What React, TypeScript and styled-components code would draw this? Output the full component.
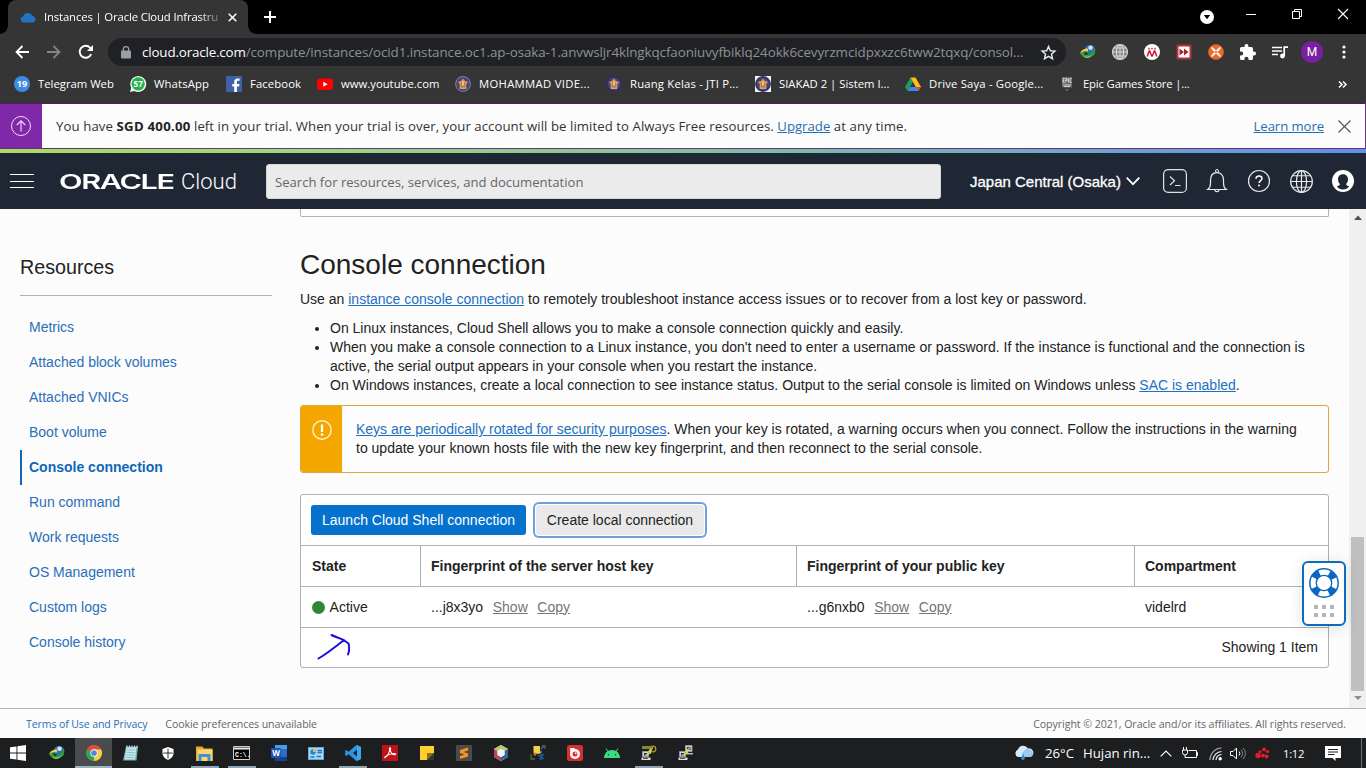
import React from "react";
import styled, { createGlobalStyle, css } from "styled-components";

const ui = `"Open Sans", "Noto Sans", sans-serif`;
const arial = `"Liberation Sans", Arial, sans-serif`;

const GlobalStyle = createGlobalStyle`
  * { box-sizing: border-box; }
  body { margin: 0; width: 1366px; height: 768px; overflow: hidden; background: #fcfcfc; font-family: ${arial}; }
  svg { display: block; flex: none; overflow: visible; }
`;

const Screen = styled.div`
  width: 1366px;
  height: 768px;
  display: flex;
  flex-direction: column;
  overflow: hidden;
`;

const Text = styled.span<{ $size?: number; $ls?: number; $color?: string; $bold?: boolean }>`
  font-family: ${ui};
  font-size: ${(p) => p.$size ?? 11.3}px;
  letter-spacing: ${(p) => p.$ls ?? 0}px;
  color: ${(p) => p.$color ?? "#fff"};
  font-weight: ${(p) => (p.$bold ? 700 : 400)};
  white-space: pre;
`;

/* ---------- browser chrome ---------- */

const TabStrip = styled.div`
  height: 34px;
  flex: none;
  background: #000;
  display: flex;
  padding-left: 8px;
`;
const Tab = styled.div`
  width: 240px;
  height: 34px;
  background: #353535;
  border-radius: 8px 8px 0 0;
  display: flex;
  align-items: center;
  padding: 0 10px 0 12px;
  position: relative;
  &::before, &::after {
    content: "";
    position: absolute;
    bottom: 0;
    width: 8px;
    height: 8px;
  }
  &::before { left: -8px; background: radial-gradient(circle at 0 0, transparent 7.5px, #353535 8px); }
  &::after { right: -8px; background: radial-gradient(circle at 100% 0, transparent 7.5px, #353535 8px); }
`;
const TabTitle = styled.div`
  width: 176px;
  margin: 0 8px 0 8px;
  line-height: 20px;
  display: flex;
  mask-image: linear-gradient(90deg, #000 155px, transparent 182px);
`;
const NewTab = styled.div`
  width: 44px;
  display: grid;
  place-items: center;
`;
const WindowButtons = styled.div`
  margin-left: auto;
  display: flex;
  height: 30px;
  svg { margin-top: 4px; }
`;
const WindowButton = styled.div<{ $w: number }>`
  width: ${(p) => p.$w}px;
  display: flex;
  justify-content: center;
`;

const Toolbar = styled.div`
  height: 36px;
  flex: none;
  background: #353535;
  display: flex;
  align-items: center;
  padding: 0 6px;
`;
const NavButton = styled.div`
  width: 32px;
  display: grid;
  place-items: center;
`;
const Omnibox = styled.div`
  width: 958px;
  height: 28px;
  margin: 0 6px;
  border-radius: 14px;
  background: #202124;
  display: flex;
  align-items: center;
  padding: 0 10px 0 13px;
`;
const Url = styled.div`
  flex: 1;
  margin-left: 11px;
  line-height: 24px;
  white-space: nowrap;
  display: flex;
`;
const Bookmarks = styled.div`
  height: 32px;
  flex: none;
  background: #353535;
  display: flex;
  align-items: center;
  padding: 0 19px 4px 14px;
`;
const Bookmark = styled.div<{ $w: number }>`
  width: ${(p) => p.$w}px;
  display: flex;
  align-items: center;
  gap: 8px;
`;
const BookmarkLabel = styled(Text)`
  padding-bottom: 2px;
`;
const Badge = styled.span`
  width: 16px;
  height: 16px;
  border-radius: 50%;
  background: #3c8ce4;
  color: #fff;
  font: 700 9px/16px ${ui};
  text-align: center;
`;
const More = styled.div`
  margin-left: auto;
`;
const Avatar = styled.div`
  width: 22px;
  height: 22px;
  border-radius: 50%;
  background: #7b1fa2;
  color: #fff;
  font: 12px/22px Roboto, sans-serif;
  text-align: center;
`;

/* ---------- trial banner and console header ---------- */

const Banner = styled.div`
  height: 47px;
  flex: none;
  border: 1px solid #6b2f86;
  border-top: 2px solid #43254f;
  border-left: 0;
  background: #fcfcfc;
  display: flex;
  align-items: center;
`;
const BannerIcon = styled.div`
  width: 42px;
  align-self: stretch;
  background: #7f28a8;
  display: grid;
  place-items: center;
`;
const BannerMessage = styled.div`
  margin-left: 14px;
  flex: 1;
  display: flex;
`;
const UiLink = styled(Text)`
  color: #1f6fb5;
  text-decoration: underline;
`;
const Rainbow = styled.div`
  height: 4px;
  flex: none;
  background: linear-gradient(90deg, #a9dc5f 0, #9edb76 20%, #7cb9a8 60%, #5b93ef 100%);
`;
const Header = styled.header`
  height: 56px;
  flex: none;
  background: #1e2733;
  display: flex;
  align-items: center;
  padding-left: 10px;
`;
const Menu = styled.div`
  width: 24px;
  height: 14px;
  border-top: 1px solid #fff;
  border-bottom: 1px solid #fff;
  display: flex;
  align-items: center;
  &::before { content: ""; flex: 1; height: 1px; background: #fff; }
`;
const Brand = styled.div`
  width: 207px;
  margin: 2px 0 0 25px;
  display: flex;
  align-items: center;
  color: #fff;
  line-height: 28px;
`;
const BrandOracle = styled.span`
  width: 122px;
  font-family: Inter, sans-serif;
  font-weight: 600;
  font-size: 20px;
  letter-spacing: -0.9px;
  transform: scaleX(1.53);
  transform-origin: 0 50%;
  white-space: nowrap;
`;
const BrandCloud = styled.span`
  font-family: Roboto, sans-serif;
  font-weight: 300;
  font-size: 22px;
`;
const Search = styled.div`
  width: 675px;
  height: 35px;
  border-radius: 3px;
  background: #ebebeb;
  border: 1px solid #d4d7da;
  padding: 2px 0 0 8px;
  display: flex;
  align-items: center;
`;
const Region = styled.div`
  margin-left: 29px;
  font-size: 15px;
  -webkit-text-stroke: 0.3px #fff;
  color: #fff;
  display: flex;
  align-items: center;
  gap: 5px;
  width: 184px;
  white-space: nowrap;
`;
const HeaderIcon = styled.div`
  width: 42px;
  display: grid;
  place-items: center;
`;

/* ---------- page ---------- */

const Page = styled.div`
  height: 499px;
  flex: none;
  display: flex;
  background: #fcfcfc;
  color: #222;
  font-size: 14px;
  line-height: 19px;
`;
const Sidebar = styled.nav`
  width: 252px;
  margin: 0 28px 0 20px;
  padding-top: 46px;
`;
const SidebarTitle = styled.h2`
  margin: 0 0 14px;
  height: 41px;
  border-bottom: 1px solid #aeb1b5;
  font-weight: 400;
  font-size: 19.7px;
  line-height: 24px;
`;
const SideItem = styled.a<{ $active?: boolean }>`
  display: block;
  height: 35px;
  line-height: 35px;
  padding-left: ${(p) => (p.$active ? 7 : 9)}px;
  color: #2a6fb8;
  ${(p) =>
    p.$active &&
    css`
      border-left: 2px solid #0f67b8;
      color: #0f67b8;
      font-weight: 700;
    `}
`;
const Main = styled.main`
  width: 1029px;
  margin-right: 20px;
`;
const PreviousPanel = styled.div`
  height: 8px;
  border: 1px solid #aeb1b5;
  border-top: 0;
  border-radius: 0 0 2px 2px;
  background: #fff;
`;
const Title = styled.h1`
  margin: 31px 0 0;
  font-weight: 400;
  font-size: 28px;
  line-height: 34px;
`;
const Paragraph = styled.p`
  margin: 8px 0 0;
`;
const Bullets = styled.ul`
  margin: 10px 0 10px;
  padding-left: 30px;
`;
const Link = styled.a<{ $muted?: boolean }>`
  color: ${(p) => (p.$muted ? "#757575" : "#1f70c0")};
  text-decoration: underline;
`;
const Alert = styled.div`
  height: 68px;
  border: 1px solid #dba63a;
  border-radius: 3px;
  overflow: hidden;
  background: #fdfdfd;
  display: flex;
`;
const AlertIcon = styled.div`
  width: 41px;
  background: #f5a700;
  display: flex;
  justify-content: center;
  padding-top: 14px;
`;
const AlertText = styled.div`
  padding: 14px 20px 0 14px;
  flex: 1;
`;
const Panel = styled.section`
  height: 174px;
  margin-top: 21px;
  border: 1px solid #aeb1b5;
  border-radius: 3px;
  background: #fff;
`;
const Actions = styled.div`
  height: 50px;
  padding: 10px;
  display: flex;
`;
const Button = styled.button<{ $primary?: boolean; $w: number }>`
  width: ${(p) => p.$w}px;
  height: 30px;
  padding: 0;
  border: 0;
  border-radius: 3px;
  font: 14px/30px ${arial};
  white-space: nowrap;
  background: ${(p) => (p.$primary ? "#0572ce" : "#e9e9e9")};
  color: ${(p) => (p.$primary ? "#fff" : "#222")};
  ${(p) =>
    !p.$primary &&
    css`
      margin-left: 10px;
      box-shadow: 0 0 0 1px #fff, 0 0 0 3px #729fd5;
    `}
`;
const Row = styled.div<{ $head?: boolean }>`
  height: 41px;
  border-top: 1px solid #aeb1b5;
  display: grid;
  grid-template-columns: 119px 376px 338px 1fr;
  font-weight: ${(p) => (p.$head ? 700 : 400)};
  & > div + div { border-left: 1px solid ${(p) => (p.$head ? "#aeb1b5" : "transparent")}; padding-left: 10px; }
`;
const Cell = styled.div`
  display: flex;
  align-items: center;
  padding-left: 11px;
  gap: 9.6px;
`;
const StatusDot = styled.i`
  width: 13px;
  height: 13px;
  border-radius: 50%;
  background: #338536;
  margin-right: -5px;
`;
const PanelFoot = styled.div`
  height: 41px;
  border-top: 1px solid #aeb1b5;
  display: flex;
  align-items: center;
  justify-content: space-between;
  padding: 0 10px 2px 16px;
`;
const Scrollbar = styled.div`
  width: 17px;
  background: #f0f0f0;
  display: flex;
  flex-direction: column;
  align-items: center;
  justify-content: space-between;
  padding: 6px 0 8px 0;
`;
const Thumb = styled.div`
  width: 13px;
  height: 154px;
  background: #bfbfbf;
  margin: auto 0 5px;
`;
const HelpWidget = styled.div`
  position: absolute;
  left: 1302px;
  top: 561px;
  width: 44px;
  height: 65px;
  border: 2px solid #0f6cbd;
  border-radius: 6px;
  background: #fff;
  box-shadow: 0 2px 14px rgba(0, 0, 0, 0.12);
  display: flex;
  flex-direction: column;
  align-items: center;
  padding-top: 5px;
`;
const Grip = styled.div`
  margin-top: 7px;
  display: grid;
  grid-template-columns: repeat(3, 4px);
  gap: 4px;
  i { height: 4px; background: #b5b5b5; }
`;
const Footer = styled.footer`
  height: 30px;
  flex: none;
  border-top: 1px solid #aeb1b5;
  background: #fcfcfc;
  display: flex;
  align-items: center;
  gap: 18px;
  padding: 0 20px 0 26px;
  & > :last-child { margin-left: auto; }
`;

/* ---------- taskbar ---------- */

const Taskbar = styled.div`
  height: 30px;
  flex: none;
  background: #1c1e20;
  display: flex;
`;
const Task = styled.div<{ $state?: "active" | "running" }>`
  width: 37px;
  display: flex;
  flex-direction: column;
  align-items: center;
  justify-content: center;
  background: ${(p) => (p.$state === "active" ? "#4a4b4c" : "transparent")};
  box-shadow: ${(p) => (p.$state === "active" ? "inset 0 -2px #9db2c2" : "none")};
  position: relative;
  ${(p) =>
    p.$state === "running" &&
    css`
      &::after { content: ""; position: absolute; bottom: 0; width: 28px; height: 2px; background: #8ea3b3; }
    `}
`;
const Start = styled(Task)`
  width: 38px;
  padding-right: 2px;
`;
const Tray = styled.div`
  margin-left: auto;
  display: flex;
  align-items: center;
`;
const TrayItem = styled.div<{ $w: number }>`
  width: ${(p) => p.$w}px;
  display: flex;
  flex: none;
`;
const ShowDesktop = styled.div`
  width: 5px;
  height: 30px;
  border-left: 1px solid #6d6f70;
`;

/* ---------- icons ---------- */

const Svg = ({ w = 16, h = w, box, children }: { w?: number; h?: number; box?: string; children: React.ReactNode }) => (
  <svg width={w} height={h} viewBox={box ?? `0 0 ${w} ${h}`} fill="none">
    {children}
  </svg>
);

const Idm = () => (
  <Svg>
    <circle cx="10" cy="6" r="5.300" fill="#2f6db5" />
    <circle cx="10.500" cy="3.800" r="2.300" fill="#d3e4f4" />
    <path d="M14 3.500c2 2 1.500 5.500-1 7.500-2.500 1-4-1-2-2.500 2-1.200 3-2.500 3-5z" fill="#2f9a3b" />
    <path d="M8 4.500C3 4.500 0 7 .5 10c1.500-2.500 4-3 7.500-2.500z" fill="#ecd34a" />
    <path d="M.5 10C2 7.500 5 7.500 6 9.500c1.500 2 5.500 1.500 9.500-1C14 13.500 4 16 .5 10z" fill="#2fa338" />
    <path d="M4 9c1.500-1 2.500-.5 4 1.200L5.500 11z" fill="#16331c" />
    <path d="M3 12c3 1.200 6 .8 9-1-2 3.500-7 4-9 1z" fill="#8fcf4c" />
  </Svg>
);
const Crest = ({ framed = false, ring = "#5d4b86" }: { framed?: boolean; ring?: string }) => (
  <Svg>
    {framed && <path d="M0 0h16v16H0z" fill="#f4f4f8" />}
    <circle cx="8" cy="8" r="7.300" fill="#2c2750" stroke={ring} strokeWidth="1.200" />
    <circle cx="8" cy="8" r="5.800" fill="#4c3f6b" stroke="#8b7aa5" strokeWidth=".7" strokeDasharray="1 1" />
    <path d="M8 2.500l2 2.500 3 .8-1.800 2.700.3 4H4.500l.3-4L3 5.800 6 5z" fill="#d29a6a" />
    <path d="M6 6.500h4v5H6z" fill="#b5803f" />
    <path d="M7.200 5.500h1.600v4H7.200z" fill="#efd68c" />
    <path d="M5 12h6v1H5z" fill="#cf9eac" />
  </Svg>
);
const Globe = ({ s = 16, bg = "none", c = "#ddd", sw = 1 }: { s?: number; bg?: string; c?: string; sw?: number }) => (
  <Svg w={s} box="0 0 24 24">
    <circle cx="12" cy="12" r="11.300" fill={bg} />
    <g stroke={c} strokeWidth={sw}>
      <circle cx="12" cy="12" r="11.300" />
      <ellipse cx="12" cy="12" rx="5.300" ry="11.300" />
      <path d="M12 .7v22.600M.7 12h22.600M2.500 6h19M2.500 18h19" />
    </g>
  </Svg>
);
const Chrome = () => (
  <Svg w={16} box="0 0 24 24">
    <path d="M12 12L1.600 6A12 12 0 0 1 22.400 6z" fill="#e14b3b" />
    <path d="M12 12L22.400 6A12 12 0 0 1 12 24z" fill="#f8cf40" />
    <path d="M12 12v12A12 12 0 0 1 1.600 6z" fill="#36a257" />
    <path d="M12 6.500h10.700L16.800 15 12 12z" fill="#f8cf40" />
    <path d="M1.600 6L7.200 15 12 12l1-6z" fill="#36a257" />
    <path d="M1.600 6A12 12 0 0 1 22.400 6.500H12A5.500 5.500 0 0 0 6.800 10.500z" fill="#e14b3b" />
    <circle cx="12" cy="12" r="5.500" fill="#fff" />
    <circle cx="12" cy="12" r="4.300" fill="#4a86e0" />
  </Svg>
);
const Putty = ({ keyed = false }: { keyed?: boolean }) => (
  <Svg>
    {keyed ? (
      <path d="M1 2.500h9" stroke="#8b8438" strokeWidth="3" />
    ) : (
      <g>
        <path d="M7.500.5h6.500v6H7.500z" fill="#ccc" stroke="#999" />
        <path d="M9 2h3.500v3H9z" fill="#2a2aa0" />
        <path d="M8 8h7v1.500H8z" fill="#bbb" />
      </g>
    )}
    <path d="M1.500 6.500h6v5h-6z" fill="#d0d0d0" stroke="#999" />
    <path d="M3 8h3v2.500H3z" fill="#2424a8" />
    <path d="M.5 12.500h9v2.500h-9z" fill="#ddd" />
    <path d="M2 13.500h5" stroke="#555" />
    {keyed && <circle cx="12" cy="4" r="2.800" stroke="#a39b3c" strokeWidth="1.300" />}
    <path d="M12 2.500L7.500 6l1 1.500L4 10.500l6-2.500-.5-1.500z" fill="#f4ee35" stroke="#d9d02a" strokeWidth=".8" />
  </Svg>
);

const bookmarks: { label: string; w: number; ls?: number; icon: React.ReactNode }[] = [
  { label: "Telegram Web", w: 116, icon: <Badge>19</Badge> },
  {
    label: "WhatsApp",
    w: 96,
    ls: 0.12,
    icon: (
      <Svg>
        <path d="M0 16l1.200-4.200A8 8 0 1 1 4.300 15z" fill="#e9f7ec" />
        <circle cx="8.200" cy="7.800" r="6.600" fill="#23b14d" />
        <text x="8.200" y="11" fontSize="8" fontWeight="700" fill="#fff" textAnchor="middle" fontFamily="Open Sans">
          57
        </text>
      </Svg>
    ),
  },
  {
    label: "Facebook",
    w: 91,
    ls: 0.1,
    icon: (
      <Svg>
        <path d="M0 0h16v16H0z" fill="#4061a8" />
        <path d="M8.200 16v-5.600H6.300V8h1.900V6.200C8.200 3.700 9.500 2.500 11.600 2.500l2 .1v2.200h-1.400c-1 0-1.300.5-1.300 1.300V8h2.600l-.4 2.400h-2.200V16z" fill="#fff" />
      </Svg>
    ),
  },
  {
    label: "www.youtube.com",
    w: 138,
    icon: (
      <Svg>
        <rect y="2.500" width="16" height="11.500" rx="3" fill="#f00" />
        <path d="M6.300 5.800v5l4.300-2.500z" fill="#fff" />
      </Svg>
    ),
  },
  { label: "MOHAMMAD VIDE...", w: 151, ls: 0.3, icon: <Crest ring="#857aa8" /> },
  { label: "Ruang Kelas - JTI P...", w: 149, ls: 0.19, icon: <Crest ring="#3a2a6b" /> },
  { label: "SIAKAD 2 | Sistem I...", w: 150, icon: <Crest framed ring="#2a3b70" /> },
  {
    label: "Drive Saya - Google...",
    w: 154,
    ls: 0.18,
    icon: (
      <Svg>
        <path d="M5.500 1.500L0 11l2.600 4L8 5.800z" fill="#18a05d" />
        <path d="M5.500 1.500h5L16 11h-5.200z" fill="#fbbf15" />
        <path d="M5 11h11l-2.600 4H2.600z" fill="#4285f4" />
        <path d="M10.800 11H16l-2.600 4z" fill="#e04434" />
      </Svg>
    ),
  },
  {
    label: "Epic Games Store |...",
    w: 130,
    ls: -0.16,
    icon: (
      <Svg>
        <path d="M3 1h10v10.500H3z" fill="#6b6b6b" />
        <path d="M4 2.500v4h1.600M4 2.500h1.600M4 4.500h1.300M6.800 6.500v-4h1.300v2H6.800M9.500 2.500v4M12.500 2.500h-1.400v4h1.400M4 9h8M5 10.500h6" stroke="#ddd" strokeWidth=".9" />
        <path d="M6 13.500h4L8 14.500z" fill="#aaa" />
      </Svg>
    ),
  },
];

const extensions: React.ReactNode[] = [
  <Idm />,
  <Globe bg="#858585" c="#d8d8d8" sw={1.6} />,
  <Svg>
    <circle cx="8" cy="8" r="8" fill="#fff" />
    <path d="M3.200 12.500l2-5.500h.6l2 5.500M8.200 12.500l2-5.500h.6l2 5.500" stroke="#c2213a" strokeWidth="1.500" />
    <path d="M4.300 3.800h1.400v1.700H4.300zM7.300 3.800h1.400v1.700H7.300zM10.300 3.800h1.400v1.700h-1.400z" fill="#c2213a" />
  </Svg>,
  <Svg>
    <rect x=".5" y=".5" width="15" height="15" rx="1.500" fill="#b5323d" />
    <rect x="2.500" y="2.500" width="11" height="11" rx="1" fill="#fff" />
    <path d="M3.500 4.500L8 8l-4.500 3.500zM8 4.500L12.500 8 8 11.500z" fill="#b11f2d" />
  </Svg>,
  <Svg>
    <circle cx="8" cy="8" r="7.800" fill="#ea6c27" />
    <circle cx="8" cy="8" r="3.600" fill="#fbe6da" />
    <path d="M3.500 3.500l9 9M12.500 3.500l-9 9" stroke="#fff" strokeWidth="1.700" />
    <path d="M8 3v3.200M8 13V9.800M3 8h3.200M13 8H9.800" stroke="#ea6c27" strokeWidth="1.800" />
    <circle cx="8" cy="8" r="1.100" fill="#ea6c27" />
  </Svg>,
  <Svg box="2 1 21 21">
    <path d="M20.500 11H19V7a2 2 0 0 0-2-2h-4V3.500a2.500 2.500 0 0 0-5 0V5H4a2 2 0 0 0-2 2v3.800h1.500a2.700 2.700 0 0 1 0 5.400H2V20a2 2 0 0 0 2 2h3.800v-1.500a2.700 2.700 0 0 1 5.400 0V22H17a2 2 0 0 0 2-2v-4h1.500a2.500 2.500 0 0 0 0-5z" fill="#fff" />
  </Svg>,
  <Svg w={16}>
    <path d="M0 3.500h10M0 7h10M0 10.500h6" stroke="#fff" strokeWidth="1.600" />
    <path d="M12.200 12V3.200H16" stroke="#fff" strokeWidth="1.700" />
    <circle cx="10.500" cy="12" r="2.400" fill="#fff" />
  </Svg>,
  <Avatar>M</Avatar>,
  <Svg w={4} h={14}>
    <circle cx="2" cy="2" r="1.600" fill="#fff" />
    <circle cx="2" cy="7" r="1.600" fill="#fff" />
    <circle cx="2" cy="12" r="1.600" fill="#fff" />
  </Svg>,
];

const tasks: { icon: React.ReactNode; state?: "active" | "running" }[] = [
  { icon: <Idm /> },
  { state: "active", icon: <Chrome /> },
  {
    icon: (
      <Svg>
        <path d="M3 1.500h12l-1.500 14H0z" fill="#6fb1bd" />
        <path d="M3.500 2.500h10l-1.500 12H1.500z" fill="#c3e5ea" />
        <path d="M4 5h8M3.700 7.500h8M3.300 10h8M3 12.500h8" stroke="#8cc3cd" />
        <path d="M4 .5v2.500M6.500.5v2.500M9 .5v2.500M11.500.5v2.500M14 .5v2.500" stroke="#d6dfe0" />
      </Svg>
    ),
  },
  {
    icon: (
      <Svg w={12} h={13} box="0 0 13 14">
        <path d="M6.500 0l6 2v4.500c0 3.500-2.500 6-6 7.500-3.500-1.500-6-4-6-7.500V2z" fill="#fff" />
        <path d="M6.500 2v10.500M1.500 6.500h10" stroke="#1c1e20" strokeWidth="1" />
      </Svg>
    ),
  },
  {
    state: "running",
    icon: (
      <Svg w={17} h={15}>
        <path d="M0 .5h6.500L8 2.500h8.500V15H0z" fill="#e9a92f" />
        <path d="M1.500 3.500h15V15h-15z" fill="#fad773" />
        <path d="M2.500 15V8h12v7h-3v-4h-6v4z" fill="#3f93cf" />
      </Svg>
    ),
  },
  {
    state: "running",
    icon: (
      <Svg w={17} h={14}>
        <path d="M.5.5h16v13H.5z" fill="#050505" stroke="#cfcfcf" />
        <path d="M1 1.500h15v2H1z" fill="#eee" />
        <text x="2" y="11" fontSize="6.500" fontWeight="700" fill="#fff" fontFamily="Liberation Mono">C:\.</text>
      </Svg>
    ),
  },
  {
    icon: (
      <Svg>
        <path d="M4 0h12v16H4z" fill="#2a6cc7" />
        <path d="M4 0h12v4H4z" fill="#41a1e8" />
        <path d="M4 12h12v4H4z" fill="#163f8c" />
        <rect x="0" y="3" width="10" height="10" rx="1" fill="#1c56b3" />
        <text x="5" y="11" fontSize="8" fontWeight="700" fill="#fff" textAnchor="middle" fontFamily="Open Sans">W</text>
      </Svg>
    ),
  },
  {
    icon: (
      <Svg w={16} h={13}>
        <rect x=".5" y=".5" width="15" height="12" fill="#a6d8f5" stroke="#5cabdc" />
        <circle cx="5" cy="5" r="2.800" fill="#2c86c8" />
        <path d="M5 5V2.200A2.800 2.800 0 0 1 7.800 5z" fill="#f0b93b" />
        <path d="M9.500 3.500H14M9.500 5.500H14M2.500 10h4M8.500 9.500H13" stroke="#2877ae" strokeWidth="1.300" />
      </Svg>
    ),
  },
  {
    state: "running",
    icon: (
      <Svg box="0 0 24 24">
        <path d="M17 0l7 3v18l-7 3L5.500 13.800 2 16.500.3 15.700V8.300L2 7.500l3.500 2.700zM18 7l-6 5 6 5z" fill="#2b95de" fillRule="evenodd" />
        <path d="M18 .4l6 2.600v18l-6 2.600z" fill="#3aa9ef" />
      </Svg>
    ),
  },
  {
    icon: (
      <Svg>
        <path d="M0 0h16v16H0z" fill="#c1121b" />
        <path d="M3 12.500C6 11 8 7 7.500 3.500 7.300 2.500 9 2.500 8.500 4c-.8 3 2 6 4.500 5.700 1.500-.5.500-1.500-1.500-1.200-3 .2-6 1.500-8 3-1 1-.7 1.500-.5 1z" stroke="#fff" strokeWidth="1.100" />
      </Svg>
    ),
  },
  {
    icon: (
      <Svg w={14}>
        <path d="M0 0h14v7l-7 7H0z" fill="#ffd02b" />
        <path d="M7 7h7v7H7z" fill="#353535" />
        <path d="M7 14V7h7z" fill="#8b731a" />
      </Svg>
    ),
  },
  {
    icon: (
      <Svg>
        <rect width="16" height="16" rx="1" fill="#4b4b4b" />
        <path d="M12 2.500v3L7.500 7l4.500 1.500v3L4 14v-3l4.500-1.500L4 8V5z" fill="#f7941e" />
      </Svg>
    ),
  },
  {
    icon: (
      <Svg>
        <path d="M8 0l7 4v8l-7 4-7-4V4z" fill="#f3f5f8" />
        <path d="M8 0l7 4-3.500 2L8 4 4.500 6 1 4z" fill="#b6c968" />
        <path d="M1 4l3.500 2v4L8 12v4l-7-4z" fill="#b8465b" />
        <path d="M15 4l-3.500 2v4L8 12v4l7-4z" fill="#3761a5" />
        <path d="M8 4l3.500 2v4L8 12l-3.500-2V6z" fill="#f1f4f7" />
      </Svg>
    ),
  },
  {
    icon: (
      <Svg>
        <path d="M3.500 1h6.500v4.500l1.500 2-3 1.500-5-1z" fill="#f7d046" />
        <path d="M11 4l3-3M10 6l2 1" stroke="#2a70a6" strokeWidth="1.500" />
        <path d="M1 9v5h4M12 1h3v3" stroke="#4f6d31" strokeWidth="1.300" />
        <path d="M8 10l6 4M14 9l-5 5M11 8v7" stroke="#1e5e9e" strokeWidth="1.400" />
        <circle cx="5" cy="9" r="1.500" fill="#d9793c" />
      </Svg>
    ),
  },
  {
    icon: (
      <Svg>
        <rect width="16" height="16" rx="2.500" fill="#d8302f" />
        <circle cx="8" cy="9" r="5" fill="#fff" />
        <circle cx="8" cy="9" r="2.500" fill="#d8302f" />
        <circle cx="8.800" cy="8.200" r=".9" fill="#fff" />
        <path d="M3 3h5l-2 2.500L3.500 8z" fill="#fff" />
      </Svg>
    ),
  },
  {
    icon: (
      <Svg w={16} h={10}>
        <path d="M0 10a8 8 0 0 1 16 0z" fill="#3ddc84" />
        <path d="M2 .5l2.500 4M14 .5l-2.500 4" stroke="#3ddc84" />
        <circle cx="4.500" cy="6.800" r=".8" fill="#15402a" />
        <circle cx="11.500" cy="6.800" r=".8" fill="#15402a" />
      </Svg>
    ),
  },
  { state: "running", icon: <Putty keyed /> },
  { icon: <Putty /> },
];

const sideItems = [
  "Metrics",
  "Attached block volumes",
  "Attached VNICs",
  "Boot volume",
  "Console connection",
  "Run command",
  "Work requests",
  "OS Management",
  "Custom logs",
  "Console history",
];

export default function App() {
  return (
    <Screen>
      <GlobalStyle />

      <TabStrip>
        <Tab>
          <Svg w={16} h={11}>
            <path d="M3.500 10.500a3.200 3.200 0 0 1-.3-6.300A5 5 0 0 1 12.500 4a3.300 3.300 0 0 1 .2 6.500z" fill="#2374c0" />
          </Svg>
          <TabTitle>
            <Text $ls={-0.13}>Instances | Oracle Cloud Infrastru</Text>
          </TabTitle>
          <Svg w={9}>
            <path d="M.7.700l7.600 7.600M8.300.7L.7 8.300" stroke="#fff" strokeWidth="1.500" />
          </Svg>
        </Tab>
        <NewTab>
          <Svg w={12}>
            <path d="M6 0v12M0 6h12" stroke="#fff" strokeWidth="2" />
          </Svg>
        </NewTab>
        <WindowButtons>
          <WindowButton $w={43}>
            <Svg w={14} h={26}>
              <circle cx="7" cy="13" r="7" fill="#fff" />
              <path d="M3.800 11h6.400L7 15.200z" fill="#000" />
            </Svg>
          </WindowButton>
          <WindowButton $w={46}>
            <Svg w={10} h={20}>
              <path d="M0 10.500h10" stroke="#fff" />
            </Svg>
          </WindowButton>
          <WindowButton $w={46}>
            <Svg w={10} h={20}>
              <path d="M.5 7.500h7v7h-7zM2.500 7.500v-2h7v7h-2" stroke="#fff" />
            </Svg>
          </WindowButton>
          <WindowButton $w={46}>
            <Svg w={10} h={20}>
              <path d="M0 5l10 10M10 5L0 15" stroke="#fff" strokeWidth="1.100" />
            </Svg>
          </WindowButton>
        </WindowButtons>
      </TabStrip>

      <Toolbar>
        <NavButton>
          <Svg w={14}>
            <path d="M14 7H1.500M7.500 1L1.500 7l6 6" stroke="#fff" strokeWidth="1.800" />
          </Svg>
        </NavButton>
        <NavButton>
          <Svg w={14}>
            <path d="M0 7h12.500M6.500 1l6 6-6 6" stroke="#858585" strokeWidth="1.800" />
          </Svg>
        </NavButton>
        <NavButton>
          <Svg w={14}>
            <path d="M12.200 9.200A6 6 0 1 1 11.200 2.800L13 4.600" stroke="#fff" strokeWidth="1.900" />
            <path d="M14 0v6H8z" fill="#fff" />
          </Svg>
        </NavButton>
        <Omnibox>
          <Svg w={10} h={13}>
            <rect y="4.500" width="10" height="8" rx="1" fill="#9aa0a6" />
            <path d="M2.300 5V3.300a2.700 2.700 0 0 1 5.400 0V5" stroke="#9aa0a6" strokeWidth="1.300" />
          </Svg>
          <Url>
            <Text $size={13.4} $ls={-0.17}>cloud.oracle.com</Text>
            <Text $size={13.4} $ls={-0.09} $color="#8e9195">
              /compute/instances/ocid1.instance.oc1.ap-osaka-1.anvwsljr4klngkqcfaoniuvyfbiklq24okk6cevyrzmcidpxxzc6tww2tqxq/consol...
            </Text>
          </Url>
          <Svg w={15} box="1.500 1.500 21 21">
            <path d="M12 3.500l2.600 6 6.400.6-4.800 4.300 1.400 6.300L12 17.400l-5.600 3.300 1.400-6.300L3 10.100l6.400-.6z" stroke="#e8eaed" strokeWidth="2" />
          </Svg>
        </Omnibox>
        {extensions.map((icon, i) => (
          <NavButton key={i}>{icon}</NavButton>
        ))}
      </Toolbar>

      <Bookmarks>
        {bookmarks.map((b) => (
          <Bookmark key={b.label} $w={b.w}>
            {b.icon}
            <BookmarkLabel $ls={b.ls}>{b.label}</BookmarkLabel>
          </Bookmark>
        ))}
        <More>
          <Svg w={9} h={7}>
            <path d="M1 .5l3 3-3 3M5 .5l3 3-3 3" stroke="#fff" strokeWidth="1.500" />
          </Svg>
        </More>
      </Bookmarks>

      <Banner>
        <BannerIcon>
          <Svg w={20}>
            <circle cx="10" cy="10" r="9.500" stroke="#f0dcf8" />
            <path d="M10 15.500V5M5.800 9L10 4.800 14.200 9" stroke="#f0dcf8" strokeWidth="1.100" />
          </Svg>
        </BannerIcon>
        <BannerMessage>
          <Text $size={13.2} $ls={0.1} $color="#333">You have </Text>
          <Text $size={13.2} $ls={0.25} $color="#222" $bold>SGD 400.00</Text>
          <Text $size={13.2} $ls={0.06} $color="#333"> left in your trial. When your trial is over, your account will be limited to Always Free resources. </Text>
          <UiLink $size={13.2} $color="#1f6fb5">Upgrade</UiLink>
          <Text $size={13.2} $ls={0.1} $color="#333"> at any time.</Text>
        </BannerMessage>
        <UiLink $size={13.1} $ls={-0.05} $color="#1f6fb5">Learn more</UiLink>
        <WindowButton $w={41}>
          <Svg w={13}>
            <path d="M.5.500l12 12M12.500.5l-12 12" stroke="#555" strokeWidth="1.100" />
          </Svg>
        </WindowButton>
      </Banner>
      <Rainbow />

      <Header>
        <Menu />
        <Brand>
          <BrandOracle>ORACLE</BrandOracle>
          <BrandCloud>Cloud</BrandCloud>
        </Brand>
        <Search>
          <Text $size={13.1} $color="#666">Search for resources, services, and documentation</Text>
        </Search>
        <Region>
          Japan Central (Osaka)
          <Svg w={14} h={8}>
            <path d="M.7.700L7 7.200 13.300.7" stroke="#fff" strokeWidth="1.800" />
          </Svg>
        </Region>
        <HeaderIcon>
          <Svg w={24}>
            <rect x=".6" y=".6" width="22.800" height="22.800" rx="4.500" stroke="#dfe3e8" strokeWidth="1.200" />
            <path d="M7 7.500l4.500 4.200L7 16M12 16.500h5.500" stroke="#dfe3e8" strokeWidth="1.200" />
          </Svg>
        </HeaderIcon>
        <HeaderIcon>
          <Svg w={20} h={24}>
            <circle cx="10" cy="2" r="1.500" stroke="#e5e8ec" />
            <path d="M.7 20.500h18.600c-2-1.600-2.800-3-2.800-6V11c0-4.500-2.500-7.300-6.500-7.300S3.500 6.500 3.500 11v3.500c0 3-.8 4.400-2.800 6zM7.800 20.500a2.200 2.200 0 0 0 4.400 0" stroke="#e5e8ec" strokeWidth="1.200" />
          </Svg>
        </HeaderIcon>
        <HeaderIcon>
          <Svg w={22} box="0 0 22 22">
            <circle cx="11" cy="11" r="10.500" stroke="#e5e8ec" strokeWidth="1.200" />
            <path d="M8 8.700C8 6.900 9.300 5.900 11 5.900s3 1 3 2.600c0 2.100-2.900 2.200-2.900 4.500" stroke="#fff" strokeWidth="1.500" />
            <circle cx="11" cy="15.500" r="1" fill="#fff" />
          </Svg>
        </HeaderIcon>
        <HeaderIcon>
          <Globe s={23} c="#e5e8ec" sw={1.3} />
        </HeaderIcon>
        <HeaderIcon>
          <Svg w={22}>
            <circle cx="11" cy="11" r="11" fill="#fff" />
            <path d="M11 4.200c3.200 0 5 2.200 5 5 0 2-.8 3.800-2 4.900.2 1.300 1.500 1.700 3.200 2.400-1.500 1.900-3.700 2.900-6.200 2.900s-4.700-1-6.200-2.900c1.700-.7 3-1.100 3.200-2.400-1.200-1.100-2-2.900-2-4.900 0-2.800 1.800-5 5-5z" fill="#1e2733" />
          </Svg>
        </HeaderIcon>
      </Header>

      <Page>
        <Sidebar>
          <SidebarTitle>Resources</SidebarTitle>
          {sideItems.map((s) => (
            <SideItem key={s} $active={s === "Console connection"}>
              {s}
            </SideItem>
          ))}
        </Sidebar>
        <Main>
          <PreviousPanel />
          <Title>Console connection</Title>
          <Paragraph>
            Use an <Link>instance console connection</Link> to remotely troubleshoot instance access issues or to recover from a lost key or password.
          </Paragraph>
          <Bullets>
            <li>On Linux instances, Cloud Shell allows you to make a console connection quickly and easily.</li>
            <li>
              When you make a console connection to a Linux instance, you don't need to enter a username or password. If the instance is functional and the connection is
              <br />
              active, the serial output appears in your console when you restart the instance.
            </li>
            <li>
              On Windows instances, create a local connection to see instance status. Output to the serial console is limited on Windows unless <Link>SAC is enabled</Link>.
            </li>
          </Bullets>
          <Alert>
            <AlertIcon>
              <Svg w={20}>
                <circle cx="10" cy="10" r="9.200" stroke="#fff3d2" strokeWidth="1.400" />
                <path d="M10 4.500v7.500" stroke="#fff" strokeWidth="2.200" />
                <circle cx="10" cy="14.600" r="1.300" fill="#fff" />
              </Svg>
            </AlertIcon>
            <AlertText>
              <Link>Keys are periodically rotated for security purposes</Link>. When your key is rotated, a warning occurs when you connect. Follow the instructions in the warning
              <br />
              to update your known hosts file with the new key fingerprint, and then reconnect to the serial console.
            </AlertText>
          </Alert>
          <Panel>
            <Actions>
              <Button $primary $w={215}>Launch Cloud Shell connection</Button>
              <Button $w={168}>Create local connection</Button>
            </Actions>
            <Row $head>
              <Cell>State</Cell>
              <Cell>Fingerprint of the server host key</Cell>
              <Cell>Fingerprint of your public key</Cell>
              <Cell>Compartment</Cell>
            </Row>
            <Row>
              <Cell>
                <StatusDot />
                Active
              </Cell>
              <Cell>
                <span>...j8x3yo</span>
                <Link $muted>Show</Link>
                <Link $muted>Copy</Link>
              </Cell>
              <Cell>
                <span>...g6nxb0</span>
                <Link $muted>Show</Link>
                <Link $muted>Copy</Link>
              </Cell>
              <Cell>videlrd</Cell>
            </Row>
            <PanelFoot>
              <Svg w={34} h={27}>
                <path d="M1.500 24.500C5 22.500 8 20.500 12 17.500L20 11.500 27 6M14.500 1c4 2 8 3 12 5l5 3.500c1 2 .5 5 .5 7.500l-1 3.500" stroke="#1b0fd8" strokeWidth="2" strokeLinecap="round" strokeLinejoin="round" />
              </Svg>
              Showing 1 Item
            </PanelFoot>
          </Panel>
        </Main>
        <Scrollbar>
          <Svg w={8} h={5}>
            <path d="M0 5l4-4.500L8 5z" fill="#505050" />
          </Svg>
          <Thumb />
          <Svg w={8} h={4}>
            <path d="M0 0h8L4 4z" fill="#909090" />
          </Svg>
        </Scrollbar>
      </Page>

      <HelpWidget>
        <Svg w={30}>
          <circle cx="15" cy="15" r="11" stroke="#0b67c2" strokeWidth="7" strokeDasharray="7.200 10.080" strokeDashoffset="-5.040" />
          <circle cx="15" cy="15" r="14.200" stroke="#0b67c2" strokeWidth="1.500" />
          <circle cx="15" cy="15" r="7.700" stroke="#0b67c2" strokeWidth="1.300" />
        </Svg>
        <Grip>
          <i /><i /><i /><i /><i /><i />
        </Grip>
      </HelpWidget>

      <Footer>
        <Text $size={10.6} $ls={-0.13} $color="#2a6fb8">Terms of Use and Privacy</Text>
        <Text $size={10.6} $ls={-0.1} $color="#666">Cookie preferences unavailable</Text>
        <Text $size={10.6} $ls={-0.05} $color="#666">Copyright © 2021, Oracle and/or its affiliates. All rights reserved.</Text>
      </Footer>

      <Taskbar>
        <Start>
          <Svg w={16}>
            <path d="M0 2.300L6.500 1.400v6.200H0zM7.400 1.300L16 0v7.600H7.400zM0 8.400h6.500v6.200L0 13.700zM7.400 8.400H16V16l-8.600-1.300z" fill="#fff" />
          </Svg>
        </Start>
        {tasks.map((t, i) => (
          <Task key={i} $state={t.state}>
            {t.icon}
          </Task>
        ))}
        <Tray>
          <TrayItem $w={31}>
            <Svg w={20} h={16}>
              <path d="M4 12a4 4 0 0 1 0-7.500A5.500 5.500 0 0 1 14 3.500a4.300 4.300 0 0 1 2 8.500z" fill="#d5e9fb" />
              <path d="M9 12a4 4 0 0 1 1-6 4 4 0 0 1 7-.5 3.500 3.500 0 0 1-.5 6.500z" fill="#9cc9f4" />
              <path d="M9 8.500l1.700 4a1.800 1.800 0 1 1-3.400 0z" fill="#2f8ee8" />
            </Svg>
          </TrayItem>
          <TrayItem $w={38}>
            <Text $size={13.2}>26°C</Text>
          </TrayItem>
          <TrayItem $w={77}>
            <Text $size={13.2}>Hujan rin...</Text>
          </TrayItem>
          <TrayItem $w={22}>
            <Svg w={12} h={7}>
              <path d="M.7 6.300L6 1l5.300 5.300" stroke="#fff" strokeWidth="1.200" />
            </Svg>
          </TrayItem>
          <TrayItem $w={27}>
            <Svg w={16} h={13}>
              <path d="M6.500 3.500h8v7h-8.500M14.500 5.500h1v3h-1" stroke="#fff" />
              <path d="M1.500 0v3M4.500 0v3M.5 3h5v2.500a2.500 2.500 0 0 1-5 0zM3 8v2.500h3" stroke="#fff" />
            </Svg>
          </TrayItem>
          <TrayItem $w={21}>
            <Svg w={13}>
              <g stroke="#eee" strokeWidth="1.200">
                <path d="M1 13A12 12 0 0 1 12.500 1" opacity=".7" />
                <path d="M4 13A9 9 0 0 1 12.500 4.500M7 13a6 6 0 0 1 5.500-5.500" />
              </g>
              <circle cx="11.200" cy="11.800" r="1.700" fill="#fff" />
            </Svg>
          </TrayItem>
          <TrayItem $w={25}>
            <Svg w={16} h={13}>
              <path d="M.5 4.500H3l3.500-3.500v11L3 8.500H.500z" stroke="#fff" />
              <path d="M9 4.500a3 3 0 0 1 0 4" stroke="#fff" />
              <path d="M11 2.700a5.500 5.500 0 0 1 0 7.600M13.200 1a8 8 0 0 1 0 11" stroke="#888" />
            </Svg>
          </TrayItem>
          <TrayItem $w={28}>
            <Svg w={14} h={12}>
              <g fill="#e01f2d">
                <circle cx="3" cy="8.500" r="2.700" />
                <circle cx="8" cy="8.500" r="2" />
                <circle cx="11.700" cy="9.500" r="1.900" />
                <circle cx="5" cy="4.700" r="1.500" />
                <circle cx="9" cy="2.500" r="2" />
                <circle cx="12.500" cy="4.500" r="1.600" />
              </g>
            </Svg>
          </TrayItem>
          <TrayItem $w={42}>
            <Text $ls={-0.3}>1:12</Text>
          </TrayItem>
          <TrayItem $w={36}>
            <Svg w={16} h={15}>
              <path d="M0 0h16v12h-5.500v3l-3-3H0z" fill="#fff" />
              <path d="M3 3.500h10M3 6h10M3 8.500h6.500" stroke="#1c1e20" />
            </Svg>
          </TrayItem>
          <ShowDesktop />
        </Tray>
      </Taskbar>
    </Screen>
  );
}
